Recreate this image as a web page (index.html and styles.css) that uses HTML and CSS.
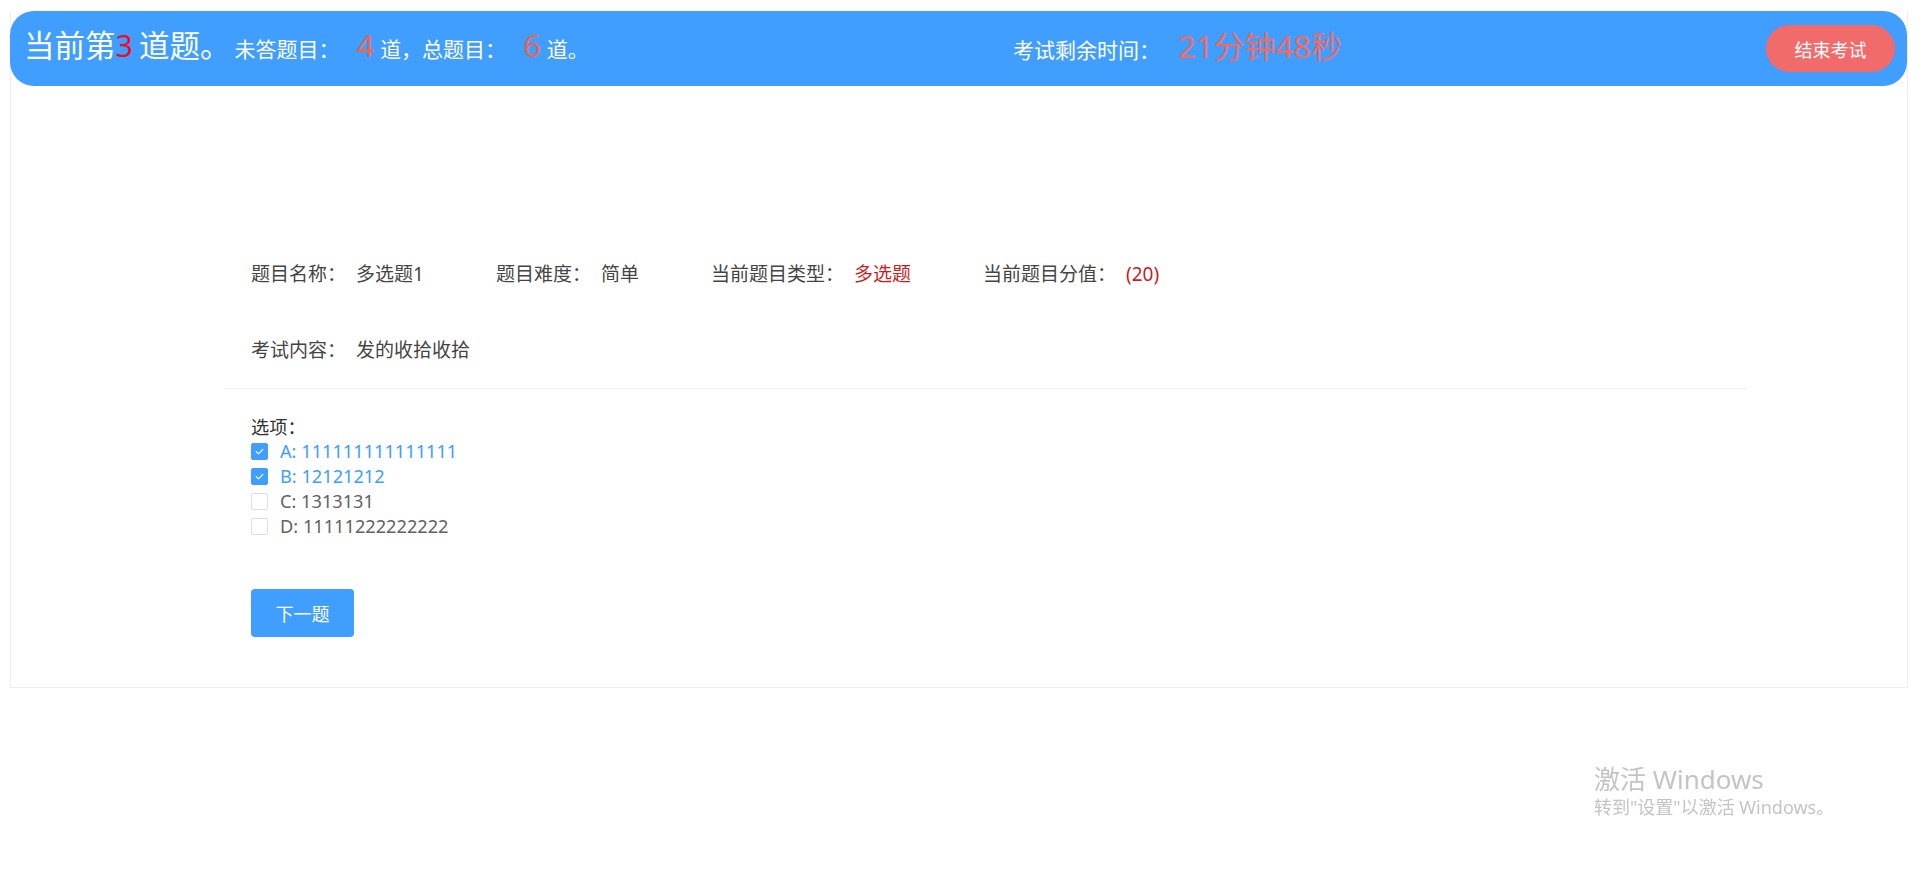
FILE: index.html
```html
<!DOCTYPE html>
<html lang="zh-CN">
<head>
<meta charset="utf-8">
<title>考试</title>
<link rel="stylesheet" href="styles.css">
</head>
<body>
<div class="card">
  <header class="topbar">
    <div class="tb-left">
      <span class="tb-big">当前第<span class="red">3</span> 道题。</span>
      <span class="tb-small">未答题目：</span><span class="num">4</span><span class="tb-small">道，总题目：</span><span class="num">6</span><span class="tb-small">道。</span>
    </div>
    <div class="tb-mid">
      <span class="tb-small">考试剩余时间：</span><span class="timer">21分钟48秒</span>
    </div>
    <button class="end-btn">结束考试</button>
  </header>

  <section class="question">
    <div class="row row-first">
      <span class="item"><span class="lbl">题目名称：</span><span class="val">多选题1</span></span>
      <span class="item"><span class="lbl">题目难度：</span><span class="val">简单</span></span>
      <span class="item"><span class="lbl">当前题目类型：</span><span class="val danger">多选题</span></span>
      <span class="item"><span class="lbl">当前题目分值：</span><span class="val danger">(20)</span></span>
    </div>
    <div class="row row-second">
      <span class="item"><span class="lbl">考试内容：</span><span class="val">发的收拾收拾</span></span>
    </div>
  </section>
  <div class="divider"></div>
  <section class="options">
    <div class="opt-title">选项：</div>
    <label class="opt checked"><span class="box"><svg viewBox="0 0 16 16" width="11" height="11"><path d="M3.2 8.2 L6.6 11.3 L12.8 4.8" fill="none" stroke="#fff" stroke-width="1.6" stroke-linecap="round" stroke-linejoin="round"/></svg></span><span class="opt-text">A: 111111111111111</span></label>
    <label class="opt checked"><span class="box"><svg viewBox="0 0 16 16" width="11" height="11"><path d="M3.2 8.2 L6.6 11.3 L12.8 4.8" fill="none" stroke="#fff" stroke-width="1.6" stroke-linecap="round" stroke-linejoin="round"/></svg></span><span class="opt-text">B: 12121212</span></label>
    <label class="opt"><span class="box"></span><span class="opt-text">C: 1313131</span></label>
    <label class="opt"><span class="box"></span><span class="opt-text">D: 11111222222222</span></label>
    <button class="next-btn">下一题</button>
  </section>
</div>

<div class="watermark">
  <div class="wm1">激活 Windows</div>
  <div class="wm2">转到"设置"以激活 Windows。</div>
</div>
</body>
</html>
```

FILE: styles.css
```css
html, body {
  margin: 0;
  padding: 0;
  background: #fff;
}
body {
  font-family: "Microsoft YaHei", "Noto Sans", "Noto Sans CJK SC", sans-serif;
  color: #444;
}
.card {
  margin: 11px 10px 0 10px;
  width: 1898px;
  border: 1px solid #ebeef5;
  border-top: none;
  padding-bottom: 50px;
  box-sizing: border-box;
}
.topbar {
  height: 75px;
  background: #409eff;
  border-radius: 24px;
  margin-left: -1px;
  display: flex;
  align-items: center;
  justify-content: space-between;
  padding: 0 12px 0 14px;
  color: #fff;
  box-sizing: border-box;
}
.tb-left, .tb-mid {
  display: flex;
  align-items: baseline;
  white-space: nowrap;
  margin-bottom: 9px;
}
.tb-big {
  font-size: 30.5px;
  margin-right: 4px;
}
.red { color: #e8102c; margin-right: -2px; }
.tb-small { font-size: 21px; }
.num {
  font-size: 31px;
  color: #ef6450;
  margin: 0 6px 0 17px;
}
.timer {
  font-size: 31px;
  color: #f26a62;
  margin-left: 18px;
}
.end-btn {
  width: 129px;
  height: 47px;
  border: none;
  border-radius: 24px;
  background: #f26b6b;
  color: #fff;
  font-family: inherit;
  font-size: 18px;
  padding: 0;
}
.question {
  padding-left: 240px;
}
.row {
  display: flex;
  align-items: center;
  height: 24px;
  font-size: 19px;
  line-height: 24px;
  white-space: nowrap;
}
.row-first { margin-top: 176px; }
.row-second { margin-top: 52px; }
.item {
  display: flex;
  margin-right: 72px;
}
.lbl { margin-right: 10px; color: #444; }
.val { color: #444; }
.danger { color: #c51f1f; }
.divider {
  margin: 26px 0 0 213px;
  width: 1523px;
  height: 1px;
  background: #ebeef5;
}
.options {
  padding-left: 240px;
  padding-top: 26px;
  font-size: 18.2px;
}
.opt-title {
  height: 24px;
  line-height: 24px;
  color: #333;
}
.opt {
  display: flex;
  align-items: center;
  height: 25px;
  color: #606266;
}
.box {
  width: 17px;
  height: 17px;
  border: 1px solid #dcdfe6;
  border-radius: 2px;
  box-sizing: border-box;
  margin-right: 12px;
  display: flex;
  align-items: center;
  justify-content: center;
  background: #fff;
}
.opt.checked .box {
  background: #409eff;
  border-color: #409eff;
}
.opt.checked { color: #409eff; }
.opt-text { line-height: 25px; }
.next-btn {
  display: block;
  margin-top: 50px;
  width: 103px;
  height: 48px;
  border: none;
  border-radius: 4px;
  background: #409eff;
  color: #fff;
  font-family: inherit;
  font-size: 18px;
  padding: 0;
}
.watermark {
  position: fixed;
  left: 1594px;
  top: 763px;
  color: #c4c4c4;
  font-family: "Noto Sans", "Noto Sans CJK SC", sans-serif;
  pointer-events: none;
}
.wm1 { font-size: 26px; line-height: 32px; }
.wm2 { font-size: 18px; line-height: 24px; }
```
